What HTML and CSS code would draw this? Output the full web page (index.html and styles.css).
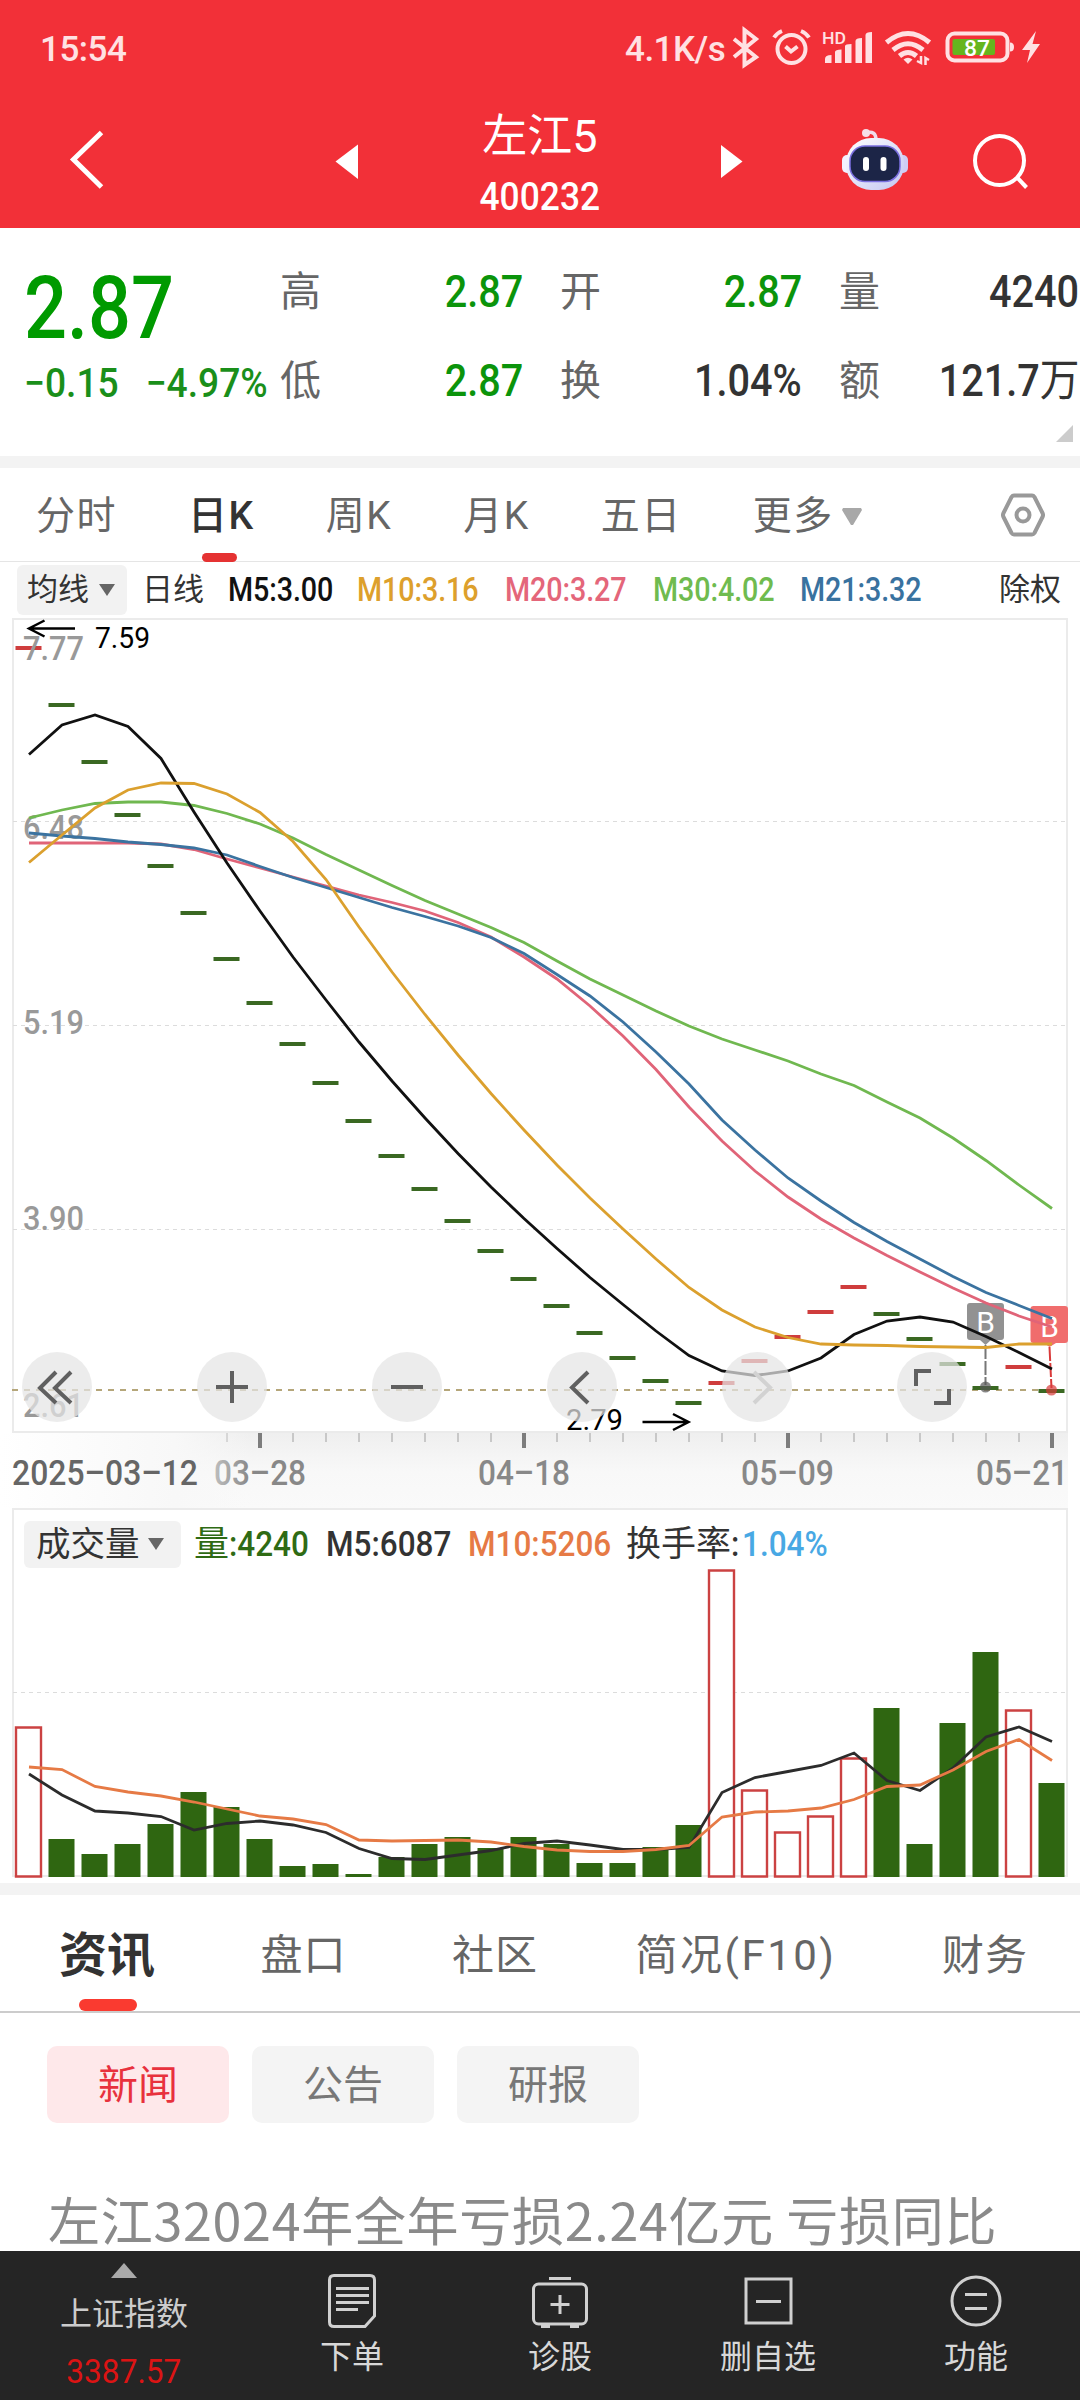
FILE: index.html
```html
<!DOCTYPE html>
<html lang="zh-CN">
<head>
    <meta charset="UTF-8">
    <meta name="viewport" content="width=device-width, initial-scale=1.0">
    <title>左江5 400232</title>
    <link rel="stylesheet" href="styles.css">
</head>
<body>
    <header class="header">
        <div class="status-bar">
            <span class="status-time">15:54</span>
            <span class="status-speed">4.1K/s</span>
            <svg class="status-icons" viewBox="728 20 320 60" width="320" height="60">
                <!-- bluetooth -->
                <path class="line" d="M734 40L756 58L744.500 66V31L756 40L734 58" />
                <!-- alarm -->
                <circle class="line" cx="791.500" cy="50" r="14" />
                <path class="line" d="M785.500 47.500L791 52.500L797.500 47.500M774 38.500Q777 34 782 32M801 32Q806 34 809 38.500" />
                <!-- signal -->
                <text x="822" y="44.500" class="hd" textLength="24" lengthAdjust="spacingAndGlyphs">HD</text>
                <path class="solid" d="M825 60Q825 56 831.500 56V64H825ZM835 53Q835 50.500 841.500 50.500V64H835ZM845 47Q845 45 851.500 45V64H845ZM855.500 42Q855.500 39 862 39V64H855.500ZM865.500 36Q865.500 33 872 33V64H865.500Z" />
                <!-- wifi -->
                <path class="line wide" d="M886.500 43.500Q908 25.500 929.500 43.500M893 51Q908 38.500 923 51" />
                <path class="line wide" d="M899.500 57Q908 50 916.500 57" />
                <path class="solid" d="M903.500 60.500Q908 57 912.500 60.500L908 65Z" />
                <path class="line thin" d="M917 62L921 64V57M929 61L925.500 59V66" />
                <!-- battery -->
                <rect class="line" x="947.500" y="34.500" width="60" height="27" rx="7" />
                <rect x="952.500" y="40" width="42.500" height="16" rx="2" fill="#66b51e" />
                <text x="964" y="57" class="level" textLength="26" lengthAdjust="spacingAndGlyphs">87</text>
                <path class="solid" d="M1010 43.500Q1014 43.500 1014 48T1010 52.500Z" />
                <path class="solid" d="M1036 32L1022 51H1030L1027 64L1040 45H1032.500Z" />
            </svg>
        </div>
        <div class="title-bar">
            <svg class="title-side" viewBox="0 98 440 130" width="440" height="130">
                <path d="M101.500 132.500L73.500 159.500L101.500 187" fill="none" stroke="#fff" stroke-width="5" />
                <path d="M335.500 161.500L358 144.500V179Z" fill="#fff" />
            </svg>
            <div class="title">
                <h1>左江5</h1>
                <span class="code">400232</span>
            </div>
            <svg class="title-side" viewBox="640 98 440 130" width="440" height="130">
                <defs>
                    <linearGradient id="shell" x1="0" y1="0" x2="1" y2="1">
                        <stop offset="0" stop-color="#fff" />
                        <stop offset="1" stop-color="#c3c6f2" />
                    </linearGradient>
                </defs>
                <path d="M721 145V178L742.500 161.500Z" fill="#fff" />
                <!-- robot assistant -->
                <path d="M866 133Q876 130 876 140" fill="none" stroke="#f0dcec" stroke-width="3.500" />
                <circle cx="866" cy="133" r="4" fill="#f6dfe8" />
                <rect x="842" y="155" width="12" height="18" rx="5" fill="#f3f1ff" />
                <rect x="896" y="155" width="12" height="18" rx="5" fill="#cfcdf5" />
                <rect x="846" y="138" width="58" height="52" rx="25" fill="url(#shell)" />
                <rect x="850" y="146" width="50" height="35.500" rx="15" fill="#1c2547" stroke="#7a6fe0" stroke-width="1.500" />
                <rect x="863" y="157" width="6" height="14" rx="3" fill="#fff" />
                <rect x="880.500" y="157" width="6" height="14" rx="3" fill="#fff" />
                <!-- search -->
                <circle cx="999.500" cy="160.500" r="24.500" fill="none" stroke="#fff" stroke-width="4" />
                <path d="M1017 177.500L1026.500 187.500" stroke="#fff" stroke-width="4" />
            </svg>
        </div>
    </header>

    <section class="quote">
        <div class="quote-main">
            <div class="price">2.87</div>
            <div class="change"><span>−0.15</span><span>−4.97%</span></div>
        </div>
        <div class="quote-grid">
            <div class="cell"><label>高</label><b class="down">2.87</b></div>
            <div class="cell"><label>开</label><b class="down">2.87</b></div>
            <div class="cell"><label>量</label><b>4240</b></div>
            <div class="cell"><label>低</label><b class="down">2.87</b></div>
            <div class="cell"><label>换</label><b>1.04%</b></div>
            <div class="cell"><label>额</label><b>121.7<i>万</i></b></div>
        </div>
        <svg class="corner" viewBox="0 0 17 17" width="17" height="17"><path d="M17 0V17H0Z" fill="#ccc" /></svg>
    </section>

    <nav class="period-tabs">
        <a>分时</a>
        <a class="active">日K</a>
        <a>周K</a>
        <a>月K</a>
        <a>五日</a>
        <a>更多<svg viewBox="0 0 20 17" width="20" height="17"><path d="M1 0H19L20 2L11 17H9L0 2Z" fill="#a8a8a8" /></svg></a>
        <svg class="settings" viewBox="0 0 44 44" width="44" height="44">
            <path d="M13 2.500H31Q32.500 2.500 33.500 4L41.500 20Q42.500 22 41.500 24L33.500 40Q32.500 41.500 31 41.500H13Q11.500 41.500 10.500 40L2.500 24Q1.500 22 2.500 20L10.500 4Q11.500 2.500 13 2.500Z" />
            <circle cx="22" cy="22" r="6.500" />
        </svg>
    </nav>

    <div class="ma-legend">
        <span class="pill">均线<i class="arrow"></i></span>
        <span class="cycle">日线</span>
        <div class="ma-values">
            <span class="m5">M5:3.00</span>
            <span class="m10">M10:3.16</span>
            <span class="m20">M20:3.27</span>
            <span class="m30">M30:4.02</span>
            <span class="m21">M21:3.32</span>
        </div>
        <span class="adjust">除权</span>
    </div>

    <section class="price-chart">
        <svg class="plot" viewBox="0 617 1080 891" width="1080" height="891">
            <defs>
                <linearGradient id="axisBg" x1="0" y1="0" x2="0" y2="1">
                    <stop offset="0" stop-color="#efefef" />
                    <stop offset="0.500" stop-color="#f8f8f8" />
                    <stop offset="1" stop-color="#fafafa" />
                </linearGradient>
                <linearGradient id="axisFade" x1="0" y1="0" x2="1" y2="0">
                    <stop offset="0" stop-color="#fff" />
                    <stop offset="0.700" stop-color="#f8f8f8" />
                    <stop offset="1" stop-color="#f8f8f8" stop-opacity="0" />
                </linearGradient>
            </defs>

            <!-- date axis -->
            <rect x="13" y="1433" width="1055" height="76" fill="url(#axisBg)" />
            <path class="tick" d="M227 1433v9M293 1433v9M326 1433v9M359 1433v9M392 1433v9M425 1433v9M458 1433v9M491 1433v9M557 1433v9M590 1433v9M623 1433v9M656 1433v9M689 1433v9M722 1433v9M755 1433v9M821 1433v9M854 1433v9M887 1433v9M920 1433v9M953 1433v9M986 1433v9M1019 1433v9" />
            <path class="tick major" d="M260 1433v15M524 1433v15M788 1433v15M1052 1433v15" />
            <text class="date" x="214" y="1485" textLength="92" lengthAdjust="spacingAndGlyphs">03–28</text>
            <rect x="0" y="1433" width="250" height="76" fill="url(#axisFade)" />
            <text class="date first" x="12" y="1485" textLength="186" lengthAdjust="spacingAndGlyphs">2025–03–12</text>
            <text class="date" x="478" y="1485" textLength="92" lengthAdjust="spacingAndGlyphs">04–18</text>
            <text class="date" x="741" y="1485" textLength="93" lengthAdjust="spacingAndGlyphs">05–09</text>
            <text class="date" x="976" y="1485" textLength="92" lengthAdjust="spacingAndGlyphs">05–21</text>

            <!-- frame and grid -->
            <path class="frame" d="M13 1432V619H1067V1432Z" />
            <path class="grid" d="M13 821.500H1067M13 1025.500H1067M13 1229.500H1067" />
            <path class="last-price" d="M12 1390H1067" />

            <!-- candles -->
            <path class="candle up" d="M15.500 648h26M708.500 1383h26M741.500 1361h26M774.500 1337h26M807.500 1312h26M840.500 1287h26M1005.500 1367h26" />
            <path class="candle down" d="M48.500 705h26M81.500 762h26M114.500 815h26M147.500 866h26M180.500 913h26M213.500 959h26M246.500 1003h26M279.500 1044h26M312.500 1083h26M345.500 1121h26M378.500 1156h26M411.500 1189h26M444.500 1221h26M477.500 1251h26M510.500 1279h26M543.500 1306h26M576.500 1333h26M609.500 1358h26M642.500 1381h26M675.500 1403h26M873.500 1314h26M906.500 1339h26M939.500 1364h26M972.500 1388h26M1038.500 1391h26" />

            <!-- buy marks -->
            <path d="M970 1303H1001Q1004 1303 1004 1306V1337Q1004 1340 1001 1340H991L985.500 1345L980 1340H970Q967 1340 967 1337V1306Q967 1303 970 1303Z" fill="#929292" />
            <path d="M985.500 1345V1385" stroke="#777" stroke-width="2" stroke-dasharray="14 2" />
            <circle cx="985.500" cy="1387" r="5.500" fill="#555" fill-opacity="0.700" />
            <path d="M1033.500 1306H1065Q1068 1306 1068 1309V1340Q1068 1343 1065 1343H1056L1049.500 1347L1044 1343H1033.500Q1030.500 1343 1030.500 1340V1309Q1030.500 1306 1033.500 1306Z" fill="#f06d6d" />
            <path d="M1049.500 1347L1051.500 1388" stroke="#d93a3a" stroke-width="2" stroke-dasharray="14 2" />
            <circle cx="1051.500" cy="1390" r="5.500" fill="#d93a3a" fill-opacity="0.700" />
            <text class="mark" x="985.500" y="1333">B</text>
            <text class="mark" x="1049.500" y="1337">B</text>

            <!-- axis labels -->
            <text class="axis" x="23" y="660" textLength="61" lengthAdjust="spacingAndGlyphs">7.77</text>
            <text class="axis" x="23" y="839" textLength="61" lengthAdjust="spacingAndGlyphs">6.48</text>
            <text class="axis" x="23" y="1034" textLength="61" lengthAdjust="spacingAndGlyphs">5.19</text>
            <text class="axis" x="23" y="1230" textLength="61" lengthAdjust="spacingAndGlyphs">3.90</text>
            <text class="axis" x="23" y="1417" textLength="61" lengthAdjust="spacingAndGlyphs">2.61</text>

            <!-- moving averages -->
            <polyline class="ma m30" points="29,818 62,810 95,803.500 128,802 161,802 194,805.500 227,813.500 260,824 293,838 326,854.500 359,870 392,885.500 425,900.500 458,914 491,927.500 524,942.500 557,961 590,979 623,995 656,1011 689,1026 722,1039 755,1050 788,1061 821,1074 854,1085.500 887,1102 920,1118 953,1138 986,1160.500 1019,1185 1052,1208.500" />
            <polyline class="ma m20" points="29,843 62,843 95,843 128,843 161,844 194,849.500 227,859 260,868 293,877 326,886 359,895 392,902.500 425,911 458,922.500 491,937 524,957 557,979 590,1006 623,1036 656,1069.500 689,1107 722,1141 755,1171 788,1197 821,1219 854,1238 887,1255.500 920,1272 953,1288 986,1303 1019,1316 1052,1327" />
            <polyline class="ma m21" points="29,833 62,836 95,838.500 128,842 161,844.500 194,848 227,855 260,866.500 293,877.500 326,887.500 359,897.500 392,907.500 425,916.500 458,926 491,937.500 524,953.500 557,974.500 590,996 623,1022 656,1052 689,1084 722,1120 755,1150 788,1178 821,1201 854,1222.500 887,1241.500 920,1259 953,1276.500 986,1292.500 1019,1305.500 1052,1318.500" />
            <polyline class="ma m5" points="29,754.500 62,725 95,715 128,726.500 161,758.500 194,812 227,863 260,911 293,957 326,1000 359,1042 392,1081 425,1118 458,1153.500 491,1187 524,1218.500 557,1248.500 590,1277.500 623,1304.500 656,1331 689,1355.500 722,1371 755,1375.500 788,1371 821,1358 854,1334.500 887,1321 920,1317 953,1322 986,1336.500 1019,1352.500 1052,1369" />
            <polyline class="ma m10" points="29,862.500 62,835 95,808 128,790 161,783 194,783.500 227,794 260,812.500 293,841.500 326,879.500 359,927 392,972 425,1014.500 458,1055 491,1093.500 524,1130 557,1165 590,1198 623,1229 656,1259 689,1287.500 722,1310 755,1327 788,1337.500 821,1344 854,1345 887,1345.500 920,1346.500 953,1347 986,1347.500 1019,1344 1052,1344" />

            <!-- high / low -->
            <path class="pointer" d="M75 628.500H29M44.500 620.500L29 628.500L44.500 636.500" />
            <text class="extreme" x="95" y="648" textLength="55" lengthAdjust="spacingAndGlyphs">7.59</text>
            <text class="extreme" x="566" y="1430" textLength="57" lengthAdjust="spacingAndGlyphs">2.79</text>
            <path class="pointer" d="M642.500 1422H688M673 1414L688.500 1422L673 1430" />
        </svg>
        <div class="chart-tools">
            <button><svg viewBox="0 0 70 70"><path d="M34 20L18 36L34 51M49 20L33 36L49 51" /></svg></button>
            <button><svg viewBox="0 0 70 70"><path d="M19 35H51M35 19V51" /></svg></button>
            <button><svg viewBox="0 0 70 70"><path d="M19 35H51" /></svg></button>
            <button><svg viewBox="0 0 70 70"><path d="M41 20L25 35.500L41 51" /></svg></button>
            <button class="off"><svg viewBox="0 0 70 70"><path d="M32 20L48 35.500L32 51" /></svg></button>
            <button><svg viewBox="0 0 70 70"><path d="M19 34V19H34M52 37V51H37" /></svg></button>
        </div>
    </section>

    <section class="volume-chart">
        <svg class="plot" viewBox="0 1508 1080 375" width="1080" height="375">
            <path class="frame" d="M13 1876V1509H1067V1876Z" />
            <path class="grid" d="M13 1692.500H1067" />
            <path class="vol down" d="M48.500 1877v-38h26v38ZM81.500 1877v-23h26v23ZM114.500 1877v-33h26v33ZM147.500 1877v-53h26v53ZM180.500 1877v-85h26v85ZM213.500 1877v-70h26v70ZM246.500 1877v-38h26v38ZM279.500 1877v-11h26v11ZM312.500 1877v-13h26v13ZM345.500 1877v-3h26v3ZM378.500 1877v-20h26v20ZM411.500 1877v-33h26v33ZM444.500 1877v-40h26v40ZM477.500 1877v-29h26v29ZM510.500 1877v-40h26v40ZM543.500 1877v-33h26v33ZM576.500 1877v-14h26v14ZM609.500 1877v-14h26v14ZM642.500 1877v-30h26v30ZM675.500 1877v-52h26v52ZM873.500 1877v-169h26v169ZM906.500 1877v-33h26v33ZM939.500 1877v-154h26v154ZM972.500 1877v-225h26v225ZM1038.500 1877v-94h26v94Z" />
            <path class="vol up" d="M16 1876.500v-149h25v149ZM709 1876.500v-306h25v306ZM742 1876.500v-86h25v86ZM775 1876.500v-44h25v44ZM808 1876.500v-60h25v60ZM841 1876.500v-118h25v118ZM1006 1876.500v-166h25v166Z" />
            <polyline class="ma v5" points="29,1774 62,1795 95,1811 128,1813 161,1816.500 194,1830 227,1823.500 260,1821 293,1825 326,1832.500 359,1848.500 392,1858.500 425,1859.500 458,1855 491,1850.500 524,1843.500 557,1841 590,1845 623,1849.500 656,1849.500 689,1847.500 722,1792.500 755,1777.500 788,1771.500 821,1765.500 854,1753 887,1780.500 920,1790.500 953,1768 986,1737 1019,1727 1052,1741.500" />
            <polyline class="ma v10" points="29,1767 62,1769.500 95,1786.500 128,1792 161,1796 194,1802 227,1809 260,1816 293,1819 326,1824.500 359,1840 392,1841 425,1840.500 458,1840 491,1842 524,1846.500 557,1850 590,1851.500 623,1851.500 656,1849.500 689,1845.500 722,1817 755,1812 788,1811 821,1808 854,1799.500 887,1786.500 920,1785 953,1770 986,1751.500 1019,1739.500 1052,1760.500" />
        </svg>
        <div class="vol-legend">
            <span class="pill">成交量<i class="arrow"></i></span>
            <span class="vol-now">量<em>:4240</em></span>
            <span class="v5"><em>M5:6087</em></span>
            <span class="v10"><em>M10:5206</em></span>
            <span class="turnover">换手率<em>:</em></span>
            <span class="rate"><em>1.04%</em></span>
        </div>
    </section>

    <nav class="info-tabs">
        <a class="active">资讯</a>
        <a>盘口</a>
        <a>社区</a>
        <a class="profile">简况(F10)</a>
        <a>财务</a>
    </nav>

    <main class="news">
        <div class="chips">
            <span class="chip active">新闻</span>
            <span class="chip">公告</span>
            <span class="chip">研报</span>
        </div>
        <h2>左江32024年全年亏损2.24亿元 亏损同比</h2>
    </main>

    <footer class="bottom-bar">
        <div class="index-item">
            <svg viewBox="0 0 26 15" width="26" height="15"><path d="M13 0L26 15H0Z" fill="#aaa" /></svg>
            <span>上证指数</span>
            <span class="index-value">3387.57</span>
        </div>
        <div class="action">
            <svg viewBox="0 0 60 60" width="60" height="60">
                <path d="M12 5.500H48Q52.500 5.500 52.500 10V46L43 56.500H12Q7.500 56.500 7.500 52V10Q7.500 5.500 12 5.500ZM14 18.500H47M14 25.500H47M14 32.500H47M14 39.500H36" />
            </svg>
            <span>下单</span>
        </div>
        <div class="action">
            <svg viewBox="0 0 60 60" width="60" height="60">
                <rect x="3.500" y="14" width="53" height="40" rx="5" />
                <path d="M19 8.500H41M11 56.500H20M40 56.500H49M30 25V44M20.500 34.500H39.500" />
            </svg>
            <span>诊股</span>
        </div>
        <div class="action">
            <svg viewBox="0 0 60 60" width="60" height="60">
                <path d="M8 9H53V53H8ZM18 31.500H43" />
            </svg>
            <span>删自选</span>
        </div>
        <div class="action">
            <svg viewBox="0 0 60 60" width="60" height="60">
                <circle cx="30" cy="31" r="24" />
                <path d="M19 24.500H41M19 38.500H41" />
            </svg>
            <span>功能</span>
        </div>
    </footer>
</body>
</html>
```

FILE: styles.css
```css
* {
    margin: 0;
    padding: 0;
    box-sizing: border-box;
}

body {
    width: 1080px;
    height: 2400px;
    overflow: hidden;
    display: flex;
    flex-direction: column;
    font-family: Roboto, "Noto Sans CJK SC", sans-serif;
    line-height: 1;
    color: #333;
    background: #fff;
}

svg {
    display: block;
    flex: none;
}

i, em {
    font-style: normal;
}

/* header */
.header {
    height: 228px;
    flex: none;
    background: #f23038;
    color: #fff;
}

.status-bar {
    height: 98px;
    display: flex;
    align-items: center;
    color: #ffe1e3;
    font-size: 35px;
    font-weight: 500;
}

.status-time {
    width: 583px;
    padding-left: 40px;
    letter-spacing: -0.5px;
}

.status-speed {
    width: 103px;
    margin-left: 42px;
    letter-spacing: -0.5px;
}

.status-icons .line {
    fill: none;
    stroke: #ffe1e3;
    stroke-width: 4;
}

.status-icons .wide {
    stroke-width: 5;
}

.status-icons .thin {
    stroke-width: 2.5;
}

.status-icons .solid {
    fill: #ffe1e3;
}

.status-icons .hd {
    font-size: 16px;
    fill: #ffe1e3;
}

.status-icons .level {
    font-size: 22px;
    fill: #fff;
}

.title-bar {
    height: 130px;
    display: flex;
}

.title {
    width: 200px;
    display: flex;
    flex-direction: column;
    align-items: center;
    padding-top: 15px;
}

.title h1 {
    font-size: 45px;
    font-weight: 400;
    line-height: 48px;
}

.title .code {
    font-size: 38px;
    font-weight: 500;
    line-height: 44px;
    margin-top: 14px;
    transform: scaleX(0.93);
}

/* quote */
.quote {
    position: relative;
    height: 240px;
    flex: none;
    display: flex;
    border-bottom: 12px solid #f3f3f3;
}

.quote-main {
    width: 280px;
    padding-left: 24px;
    color: #009a00;
}

.price {
    font-size: 87px;
    font-weight: 500;
    line-height: 100px;
    margin-top: 30px;
    transform: scaleX(0.87);
    transform-origin: left;
}

.change {
    display: flex;
    gap: 29px;
    margin-top: 4px;
    font-size: 40px;
    font-weight: 500;
    line-height: 44px;
    white-space: nowrap;
    color: #1a8f1a;
    transform: scaleX(0.93);
    transform-origin: left;
}

.quote-grid {
    display: grid;
    grid-template-columns: 243px 242px 240px;
    grid-auto-rows: 89px;
    column-gap: 37px;
    padding-top: 19px;
}

.cell {
    display: flex;
    align-items: center;
    justify-content: space-between;
    color: #666;
    font-size: 41px;
}

.cell label {
    padding-top: 2px;
}

.cell b {
    font-size: 44px;
    font-weight: 500;
    color: #333;
    transform: scaleX(0.9);
    transform-origin: right;
}

.cell i {
    font-weight: 400;
}

.cell .down {
    color: #0b940b;
}

.corner {
    position: absolute;
    right: 7px;
    bottom: 14px;
}

/* period tabs */
.period-tabs {
    height: 94px;
    flex: none;
    display: flex;
    align-items: center;
    border-bottom: 1px solid #e5e5e5;
    padding-left: 36px;
    font-size: 39px;
    color: #666;
}

.period-tabs a {
    position: relative;
    display: flex;
    align-items: center;
    gap: 8px;
    height: 94px;
    padding-top: 3px;
    letter-spacing: 1.5px;
    white-space: nowrap;
    margin-right: 71px;
}

.period-tabs .active {
    color: #333;
    font-weight: 500;
}

.period-tabs .active::after {
    content: "";
    position: absolute;
    left: 14px;
    bottom: 0;
    width: 35px;
    height: 9px;
    border-radius: 5px;
    background: #e53232;
}

.settings {
    margin-left: auto;
    margin-right: 35px;
    fill: none;
    stroke: #999;
    stroke-width: 4;
}

/* chart legends */
.pill {
    display: flex;
    align-items: center;
    gap: 10px;
    border-radius: 6px;
    background: #f2f2f2;
}

.arrow {
    border: 8px solid transparent;
    border-top: 12px solid #666;
    border-bottom: 0;
}

.ma-legend {
    height: 55px;
    flex: none;
    display: flex;
    align-items: center;
    padding: 0 19px 0 17px;
    font-size: 31px;
}

.ma-legend .pill {
    width: 110px;
    height: 50px;
    padding-left: 10px;
}

.cycle {
    width: 86px;
    margin-left: 15px;
}

.ma-values {
    display: flex;
    gap: 8px;
    font-size: 33px;
    font-weight: 500;
}

.ma-values span {
    letter-spacing: -0.1px;
    transform: scaleX(0.87);
    transform-origin: left;
}

.ma-values .m5 { color: #111; }
.ma-values .m10 { color: #dda02c; }
.ma-values .m20 { color: #e4667a; }
.ma-values .m30 { color: #6fbb4f; }
.ma-values .m21 { color: #39729f; }

.adjust {
    margin-left: auto;
}

/* charts */
.price-chart {
    position: relative;
    height: 891px;
    flex: none;
}

.volume-chart {
    position: relative;
    height: 387px;
    flex: none;
    border-bottom: 12px solid #f3f3f3;
}

.frame {
    fill: none;
    stroke: #ebebeb;
    stroke-width: 2;
}

.grid {
    stroke: #dcdcdc;
    stroke-width: 1;
    stroke-dasharray: 4 4;
}

.last-price {
    stroke: #b5a67a;
    stroke-width: 2;
    stroke-dasharray: 6 6;
}

.tick {
    stroke: #c8c8c8;
    stroke-width: 2;
}

.tick.major {
    stroke: #7d7d7d;
    stroke-width: 4;
}

.plot .date {
    font-size: 35px;
    font-weight: 500;
    fill: #888;
}

.plot .first {
    fill: #666;
}

.candle {
    stroke-width: 4;
}

.candle.up { stroke: #cf3d3d; }
.candle.down { stroke: #3a6822; }

.mark {
    font-size: 30px;
    fill: #fff;
    text-anchor: middle;
}

.axis {
    font-size: 34px;
    font-weight: 500;
    fill: #999;
}

.extreme {
    font-size: 29px;
    fill: #000;
}

.pointer {
    fill: none;
    stroke: #000;
    stroke-width: 2.5;
}

.ma {
    fill: none;
    stroke-width: 2.8;
}

.ma.m5 { stroke: #111; }
.ma.m10 { stroke: #dba02e; }
.ma.m20 { stroke: #e06478; }
.ma.m30 { stroke: #70b850; }
.ma.m21 { stroke: #3b73a0; }
.ma.v5 { stroke: #2c2c2c; }
.ma.v10 { stroke: #e67a45; }

.vol.down {
    fill: #2f6611;
}

.vol.up {
    fill: #fff;
    stroke: #cb4242;
    stroke-width: 2.4;
}

.chart-tools {
    position: absolute;
    left: 22px;
    top: 735px;
    display: flex;
    gap: 105px;
}

.chart-tools button {
    width: 70px;
    height: 70px;
    border: none;
    border-radius: 50%;
    background: rgba(228, 228, 228, 0.72);
}

.chart-tools path {
    fill: none;
    stroke: #606060;
    stroke-width: 4;
}

.chart-tools .off path {
    stroke: #d2d2d2;
}

.vol-legend {
    position: absolute;
    left: 24px;
    top: 12px;
    height: 48px;
    display: flex;
    align-items: center;
    font-size: 35px;
    white-space: nowrap;
}

.vol-legend .pill {
    width: 157px;
    height: 47px;
    padding-left: 12px;
    gap: 8px;
    font-size: 34.5px;
}

.vol-legend em {
    display: inline-block;
    font-weight: 500;
    transform: scaleX(0.9);
    transform-origin: left;
}

.vol-now {
    width: 132px;
    margin-left: 13px;
    color: #2f6b14;
}

.v5 {
    width: 142px;
}

.v10 {
    width: 158px;
    color: #e67a45;
}

.turnover {
    width: 116px;
}

.rate {
    color: #48a8e4;
}

/* info tabs */
.info-tabs {
    height: 118px;
    flex: none;
    display: flex;
    align-items: center;
    justify-content: space-between;
    padding: 0 52px 0 59px;
    border-bottom: 2px solid #ccc;
    font-size: 42px;
    letter-spacing: 1px;
    color: #666;
}

.info-tabs a {
    position: relative;
    height: 116px;
    line-height: 121px;
}

.info-tabs .profile {
    letter-spacing: 2.5px;
    margin-left: -8px;
}

.info-tabs .active {
    font-size: 48px;
    font-weight: 700;
    letter-spacing: 0;
    color: #333;
}

.info-tabs .active::after {
    content: "";
    position: absolute;
    left: 20px;
    bottom: 0;
    width: 58px;
    height: 12px;
    border-radius: 6px;
    background: #fa3a30;
}

/* news */
.news {
    flex: 1;
    overflow: hidden;
    padding: 33px 47px 0;
}

.chips {
    display: flex;
    gap: 23px;
}

.chip {
    width: 182px;
    height: 77px;
    line-height: 79px;
    border-radius: 10px;
    background: #f4f4f4;
    color: #777;
    font-size: 40px;
    text-align: center;
}

.chip.active {
    background: #fee8ea;
    color: #e8313d;
}

.news h2 {
    margin: 70px 0 0 1px;
    font-family: "Noto Sans CJK SC", sans-serif;
    font-size: 52px;
    font-weight: 400;
    line-height: 52px;
    letter-spacing: 0.7px;
    white-space: nowrap;
    color: #8a8a8a;
}

/* bottom bar */
.bottom-bar {
    height: 149px;
    flex: none;
    display: flex;
    background: #252525;
    color: #ccc;
    font-size: 32px;
}

.index-item {
    width: 248px;
    display: flex;
    flex-direction: column;
    align-items: center;
    padding-top: 12px;
}

.index-item span {
    line-height: 36px;
    margin-top: 18px;
}

.index-item .index-value {
    margin-top: 21px;
    font-size: 34px;
    color: #dc1414;
    transform: scaleX(0.93);
}

.action {
    width: 208px;
    display: flex;
    flex-direction: column;
    align-items: center;
    padding-top: 19px;
    color: #d8d8d8;
}

.action svg {
    fill: none;
    stroke: #d0d0d0;
    stroke-width: 3;
}

.action span {
    line-height: 36px;
    margin-top: 9px;
}
```
